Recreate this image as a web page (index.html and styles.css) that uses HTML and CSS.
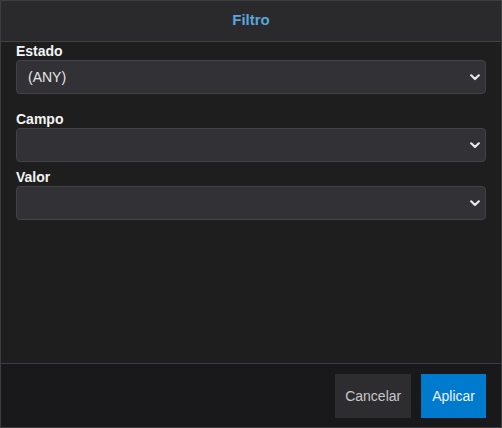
FILE: index.html
```html
<!DOCTYPE html>
<html lang="es">
<head>
<meta charset="utf-8">
<title>Filtro</title>
<link rel="stylesheet" href="styles.css">
</head>
<body>
<div class="dialog">
  <div class="dialog-header">Filtro</div>
  <div class="dialog-body">
    <div class="field field-first">
      <label class="field-label">Estado</label>
      <div class="select">
        <span class="select-value">(ANY)</span>
        <svg class="chevron" width="10" height="7" viewBox="0 0 10 7"><path d="M1.2 1.3 L5 5 L8.8 1.3" fill="none" stroke="#e8e8e8" stroke-width="2.2" stroke-linecap="round" stroke-linejoin="round"/></svg>
      </div>
    </div>
    <div class="field">
      <label class="field-label">Campo</label>
      <div class="select">
        <span class="select-value"></span>
        <svg class="chevron" width="10" height="7" viewBox="0 0 10 7"><path d="M1.2 1.3 L5 5 L8.8 1.3" fill="none" stroke="#e8e8e8" stroke-width="2.2" stroke-linecap="round" stroke-linejoin="round"/></svg>
      </div>
    </div>
    <div class="field">
      <label class="field-label">Valor</label>
      <div class="select">
        <span class="select-value"></span>
        <svg class="chevron" width="10" height="7" viewBox="0 0 10 7"><path d="M1.2 1.3 L5 5 L8.8 1.3" fill="none" stroke="#e8e8e8" stroke-width="2.2" stroke-linecap="round" stroke-linejoin="round"/></svg>
      </div>
    </div>
  </div>
  <div class="dialog-footer">
    <button class="btn btn-secondary">Cancelar</button>
    <button class="btn btn-primary">Aplicar</button>
  </div>
</div>
</body>
</html>
```
FILE: styles.css
```css
* { box-sizing: border-box; }
html, body {
  margin: 0;
  padding: 0;
  background: #1e1e1e;
}
body {
  font-family: "Liberation Sans", Arial, sans-serif;
  font-size: 14px;
  color: #e8e8e8;
}
.dialog {
  width: 502px;
  height: 428px;
  border: 1px solid #3d3d3f;
  display: flex;
  flex-direction: column;
  background: #1e1e1e;
}
.dialog-header {
  height: 41px;
  line-height: 38px;
  background: #2a2a2d;
  border-bottom: 1px solid #434345;
  text-align: center;
  color: #5ba4dc;
  font-weight: bold;
  font-size: 15px;
}
.dialog-body {
  flex: 1;
  padding: 1px 15px 0;
}
.field { margin-bottom: 7px; }
.field-first { margin-bottom: 17px; }
.field-label {
  display: block;
  font-weight: bold;
  font-size: 14px;
  line-height: 16px;
  color: #f4f4f4;
  margin-bottom: 1px;
}
.select {
  height: 34px;
  display: flex;
  align-items: center;
  justify-content: space-between;
  background: #323236;
  border: 1px solid #434347;
  border-radius: 4px;
  padding: 0 5px 0 11px;
  color: #e6e6e6;
}
.select-value { font-size: 14px; }
.chevron { display: block; }
.dialog-footer {
  height: 64px;
  border-top: 1px solid #3d3d3f;
  background: #19191b;
  display: flex;
  justify-content: flex-end;
  align-items: flex-start;
  gap: 10px;
  padding: 10px 15px 0;
}
.btn {
  height: 44px;
  border: none;
  font-family: "Liberation Sans", Arial, sans-serif;
  font-size: 14px;
  padding: 0 10px;
  margin: 0;
}
.btn-secondary {
  background: #2d2d30;
  color: #c8c8c8;
}
.btn-primary {
  background: #007acc;
  color: #eaf2fb;
  padding: 0 11px;
}
```
